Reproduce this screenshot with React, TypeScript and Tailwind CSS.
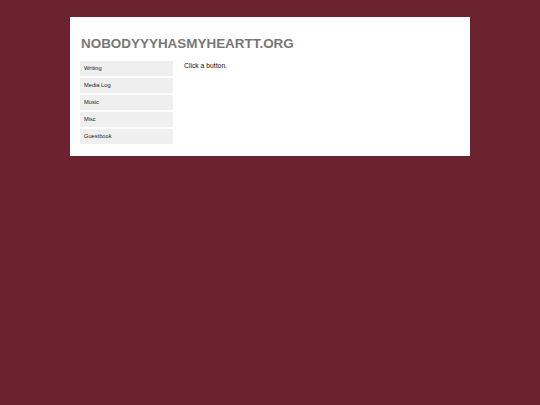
const links = ["Writing", "Media Log", "Music", "Misc", "Guestbook"];

export default function App() {
  return (
    <div
      className="min-h-[405px] w-full bg-[#6b2330] pt-[17px]"
      style={{ fontFamily: '"Liberation Sans", Arial, sans-serif' }}
    >
      <div className="mx-auto flex w-[400px] flex-col bg-white pl-[10px] pr-[10px] pt-[19px] pb-[12px]">
        <h1 className="pl-[1px] text-[13.45px] font-bold leading-[16px] text-[#777777]">
          NOBODYYYHASMYHEARTT.ORG
        </h1>
        <div className="mt-[9px] flex gap-[11px]">
          <nav className="flex w-[93px] flex-col gap-[2px]">
            {links.map(label => (
              <button
                key={label}
                type="button"
                className="flex h-[15px] items-center bg-[#efefef] pl-[4px] text-left text-[5.7px] text-[#222222]"
              >
                {label}
              </button>
            ))}
          </nav>
          <p className="text-[6.8px] leading-[9px] text-[#111111]">Click a button.</p>
        </div>
      </div>
    </div>
  );
}
